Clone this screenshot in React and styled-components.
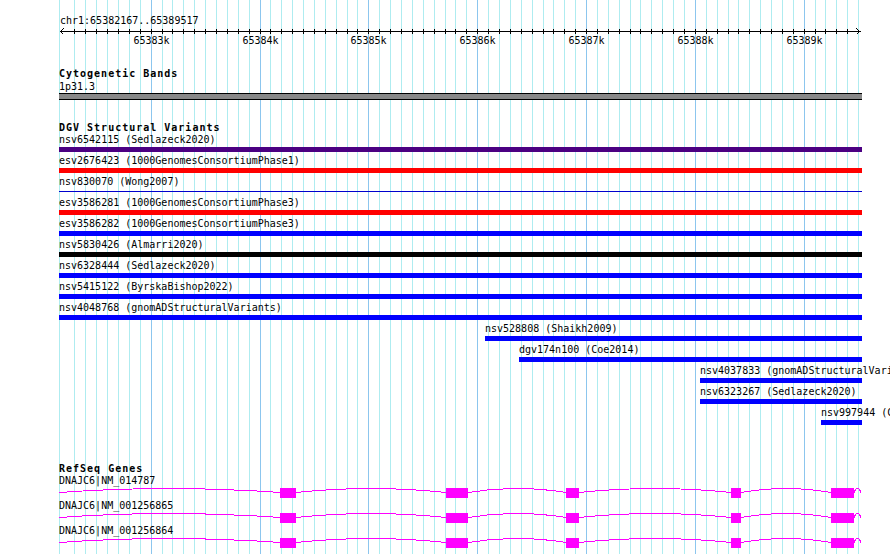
import React from 'react';
import styled, { createGlobalStyle } from 'styled-components';

const START = 65382167;
const END = 65389517;
const VIEW_LEFT = 60;
const VIEW_WIDTH = 800;
const TRACK_LEFT = 59;
const TRACK_RIGHT = 862;

const toX = bp => VIEW_LEFT + ((bp - START) * VIEW_WIDTH) / (END - START);

const gridStops = [];
for (let bp = 65382300; bp < END; bp += 100) {
  gridStops.push({ bp, x: Math.round(toX(bp)), major: bp % 1000 === 0 });
}

const variants = [
  { name: 'nsv6542115', study: 'Sedlazeck2020', color: '#4b0082' },
  { name: 'esv2676423', study: '1000GenomesConsortiumPhase1', color: '#ff0000' },
  { name: 'nsv830070', study: 'Wong2007', color: '#0000cd', thin: true },
  { name: 'esv3586281', study: '1000GenomesConsortiumPhase3', color: '#ff0000' },
  { name: 'esv3586282', study: '1000GenomesConsortiumPhase3', color: '#0000ff' },
  { name: 'nsv5830426', study: 'Almarri2020', color: '#000000' },
  { name: 'nsv6328444', study: 'Sedlazeck2020', color: '#0000ff' },
  { name: 'nsv5415122', study: 'ByrskaBishop2022', color: '#0000ff' },
  { name: 'nsv4048768', study: 'gnomADStructuralVariants', color: '#0000ff' },
  { name: 'nsv528808', study: 'Shaikh2009', color: '#0000ff', start: 65386072 },
  { name: 'dgv174n100', study: 'Coe2014', color: '#0000ff', start: 65386384 },
  { name: 'nsv4037833', study: 'gnomADStructuralVariants', color: '#0000ff', start: 65388047 },
  { name: 'nsv6323267', study: 'Sedlazeck2020', color: '#0000ff', start: 65388047 },
  { name: 'nsv997944', study: 'Cooper2011', color: '#0000ff', start: 65389159 },
];

// exon pixel spans (same model for every transcript in view)
const exons = [
  [280, 296],
  [446, 468],
  [566, 579],
  [731, 741],
  [831, 854],
];

const genes = ['DNAJC6|NM_014787', 'DNAJC6|NM_001256865', 'DNAJC6|NM_001256864'];

const introns = (() => {
  const out = [];
  let prev = TRACK_LEFT;
  exons.forEach(([a, b]) => {
    out.push([prev, a]);
    prev = b;
  });
  out.push([prev, 861]);
  return out;
})();

const GlobalStyle = createGlobalStyle`
  html, body {
    margin: 0;
    padding: 0;
    background: #fff;
  }
`;

const Page = styled.div`
  position: relative;
  width: 890px;
  height: 554px;
  overflow: hidden;
  background: #fff;
  color: #000;
`;

const GridLayer = styled.svg`
  position: absolute;
  top: 0;
  left: 0;
  width: 890px;
  height: 554px;
  z-index: 0;
`;

const Content = styled.div`
  position: relative;
  z-index: 1;
  padding-top: 14px;
`;

const Locus = styled.div`
  margin-left: 60px;
  font: 10px/14px 'DejaVu Sans Mono', monospace;
  white-space: nowrap;
`;

const Axis = styled.svg`
  display: block;
  width: 890px;
  height: 7px;
`;

const TickRow = styled.div`
  position: relative;
  height: 12px;
`;

const TickLabel = styled.span`
  position: absolute;
  top: 0;
  transform: translateX(-50%);
  font: 10px/11px 'DejaVu Sans Mono', monospace;
  white-space: nowrap;
`;

const Track = styled.section`
  margin-top: ${p => p.$gap}px;
  display: flex;
  flex-direction: column;
`;

const TrackTitle = styled.h2`
  margin: 0 0 ${p => p.$after}px 59px;
  font: bold 10px/11px 'DejaVu Sans Mono', monospace;
  letter-spacing: 1px;
  white-space: nowrap;
`;

const FeatureLabel = styled.div`
  font: 10px/11px 'DejaVu Sans Mono', monospace;
  white-space: nowrap;
`;

const Band = styled.div`
  margin: 1px 0 0 ${TRACK_LEFT}px;
  width: ${TRACK_RIGHT - TRACK_LEFT}px;
  height: 5px;
  border-top: 1px solid #000;
  border-bottom: 1px solid #000;
  background: #888;
`;

const Feature = styled.div`
  display: flex;
  flex-direction: column;
`;

const Bar = styled.div`
  height: 5px;
  margin: 2px 0 3px;
  background: ${p =>
    p.$thin
      ? `linear-gradient(transparent 2px, ${p.$color} 2px, ${p.$color} 3px, transparent 3px)`
      : p.$color};
`;

const GeneRow = styled.div`
  display: flex;
  flex-direction: column;
`;

const GeneGlyph = styled.svg`
  display: block;
  width: 890px;
  height: 10px;
  margin: 2px 0 2px;
  overflow: visible;
`;

const Grid = () => (
  <GridLayer viewBox="0 0 890 554" shapeRendering="crispEdges">
    <line x1={59.5} y1={0} x2={59.5} y2={554} stroke="#aeecf0" />
    {gridStops.map(({ bp, x, major }) => (
      <line
        key={bp}
        x1={x + 0.5}
        y1={0}
        x2={x + 0.5}
        y2={554}
        stroke={major ? '#8cc6ee' : '#aeecf0'}
      />
    ))}
  </GridLayer>
);

const Ruler = () => (
  <div>
    <Locus>chr1:65382167..65389517</Locus>
    <Axis viewBox="0 0 890 7" shapeRendering="crispEdges">
      <line x1={60} y1={3.5} x2={861} y2={3.5} stroke="#000" />
      {gridStops
        .filter(({ bp }) => bp < 65389500)
        .map(({ bp, x }) => (
          <line key={bp} x1={x + 0.5} y1={1} x2={x + 0.5} y2={6} stroke="#000" />
        ))}
      <polyline points="63.5,0.5 60.5,3.5 63.5,6.5" fill="none" stroke="#000" />
      <polyline points="856.5,0.5 859.5,3.5 856.5,6.5" fill="none" stroke="#000" />
    </Axis>
    <TickRow>
      {gridStops
        .filter(s => s.major)
        .map(({ bp, x }) => (
          <TickLabel key={bp} style={{ left: x + 0.5 }}>
            {bp / 1000}k
          </TickLabel>
        ))}
    </TickRow>
  </div>
);

const Variant = ({ name, study, color, thin, start }) => {
  const left = start ? Math.max(TRACK_LEFT, Math.round(toX(start))) : TRACK_LEFT;
  return (
    <Feature>
      <FeatureLabel style={{ marginLeft: left }}>
        {name} ({study})
      </FeatureLabel>
      <Bar $color={color} $thin={thin} style={{ marginLeft: left, width: TRACK_RIGHT - left }} />
    </Feature>
  );
};

const Transcript = ({ label }) => (
  <GeneRow>
    <FeatureLabel style={{ marginLeft: TRACK_LEFT }}>{label}</FeatureLabel>
    <GeneGlyph viewBox="0 0 890 10">
      <g shapeRendering="crispEdges" fill="none" stroke="#ff00ff">
        {introns.map(([a, b]) => (
          <path key={a} d={`M${a} 4.5 Q${(a + b) / 2} -3.5 ${b} 4.5`} />
        ))}
      </g>
      {exons.map(([a, b]) => (
        <rect key={a} x={a} y={0} width={b - a} height={10} fill="#ff00ff" />
      ))}
    </GeneGlyph>
  </GeneRow>
);

const App = () => (
  <Page>
    <GlobalStyle />
    <Grid />
    <Content>
      <Ruler />
      <Track $gap={21}>
        <TrackTitle $after={2}>Cytogenetic Bands</TrackTitle>
        <FeatureLabel style={{ marginLeft: TRACK_LEFT }}>1p31.3</FeatureLabel>
        <Band />
      </Track>
      <Track $gap={22}>
        <TrackTitle $after={1}>DGV Structural Variants</TrackTitle>
        {variants.map(v => (
          <Variant key={v.name} {...v} />
        ))}
      </Track>
      <Track $gap={35}>
        <TrackTitle $after={1}>RefSeq Genes</TrackTitle>
        {genes.map(g => (
          <Transcript key={g} label={g} />
        ))}
      </Track>
    </Content>
  </Page>
);

export default App;
